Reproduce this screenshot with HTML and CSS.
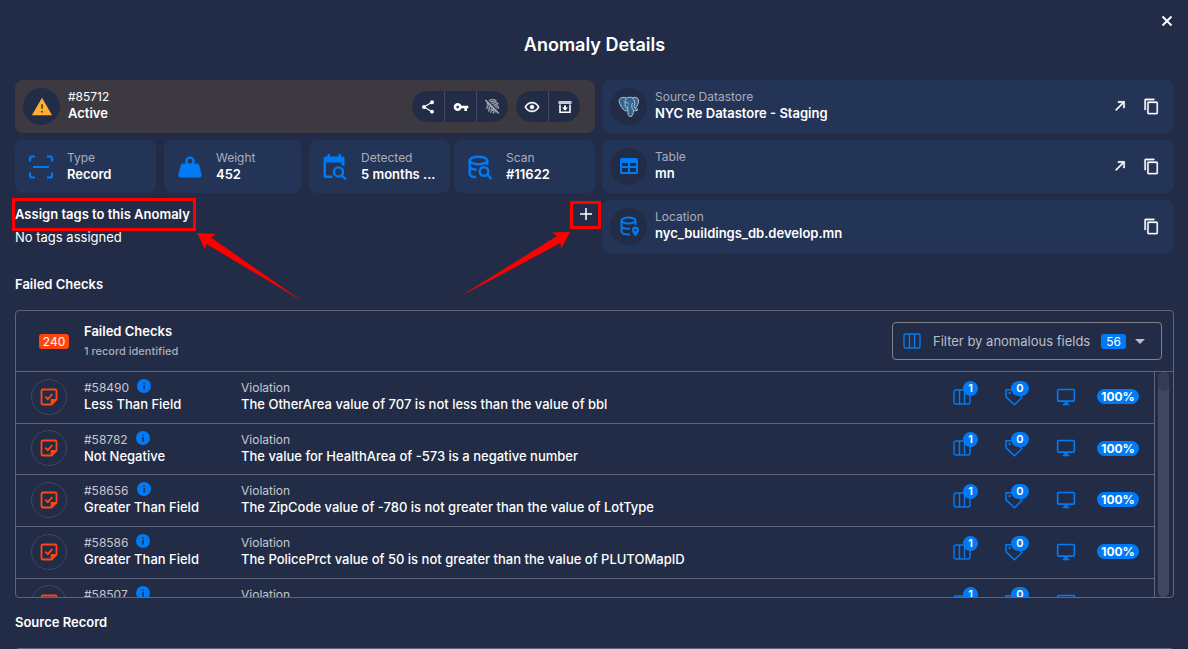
FILE: index.html
```html
<!DOCTYPE html>
<html lang="en">
<head>
<meta charset="utf-8">
<title>Anomaly Details</title>
<link rel="stylesheet" href="styles.css">
</head>
<body>
<svg class="sprite" aria-hidden="true">
  <symbol id="copy" viewBox="0 0 24 24"><path d="M19,21H8V7H19M19,5H8A2,2 0 0,0 6,7V21A2,2 0 0,0 8,23H19A2,2 0 0,0 21,21V7A2,2 0 0,0 19,5M16,1H4A2,2 0 0,0 2,3V17H4V3H16V1Z" stroke="currentColor" stroke-width=".4"/></symbol>
  <symbol id="open" viewBox="0 0 24 24"><path d="M5,17.59L15.59,7H9V5H19V15H17V8.41L6.41,19L5,17.59Z" stroke="currentColor" stroke-width=".7"/></symbol>
  <symbol id="check-note" viewBox="0 0 24 24"><path d="M5 3H19A2 2 0 0 1 21 5V15L15 21H5A2 2 0 0 1 3 19V5A2 2 0 0 1 5 3Z" fill="none" stroke="currentColor" stroke-width="2.2"/><path d="M14 22V14.5H22Z"/><path d="M7.5 11.5L10.5 14.5L16 8.5" fill="none" stroke="currentColor" stroke-width="2.2"/></symbol>
  <symbol id="columns" viewBox="0 0 18 16"><path d="M3 1H15A2 2 0 0 1 17 3V13A2 2 0 0 1 15 15H3A2 2 0 0 1 1 13V3A2 2 0 0 1 3 1ZM6.5 1V15M11.5 1V15" fill="none" stroke="currentColor" stroke-width="1.4"/></symbol>
  <symbol id="tag" viewBox="0 0 18 18"><path d="M1 1.8H9L17 9.5L9.5 16.7L1 8.8Z" fill="none" stroke="currentColor" stroke-width="1.5"/><circle cx="4.6" cy="5" r="1.2"/></symbol>
  <symbol id="monitor" viewBox="0 0 24 24"><path d="M21,16H3V4H21M21,2H3C1.89,2 1,2.89 1,4V16A2,2 0 0,0 3,18H10V20H8V22H16V20H14V18H21A2,2 0 0,0 23,16V4C23,2.89 22.1,2 21,2Z"/></symbol>
  <symbol id="info" viewBox="0 0 14 14"><circle cx="7" cy="7" r="7"/><path d="M6.3 3.4H7.8V4.9H6.3ZM6.3 6.1H7.8V10.6H6.3Z" fill="#232c46"/></symbol>
</svg>

<main class="dialog">
  <header class="dialog-head">
    <h1>Anomaly Details</h1>
    <button class="icon-btn close" aria-label="Close"><svg viewBox="0 0 12 12" width="12" height="12"><path d="M1.5 1.5L10.5 10.5M10.5 1.5L1.5 10.5" stroke="currentColor" stroke-width="1.9"/></svg></button>
  </header>

  <section class="overview">
    <div class="stack">
      <div class="card status">
        <span class="round"><svg class="warn" viewBox="0 0 24 24" width="22" height="22"><path d="M1 21H23L12 2Z"/><path d="M11 9H13V14H11ZM11 16H13V18H11Z" fill="#60482b"/></svg></span>
        <div class="pair light"><span>#85712</span><strong>Active</strong></div>
        <div class="groups">
          <div class="group">
            <button aria-label="Share"><svg viewBox="0 0 24 24" width="16" height="16"><path d="M18,16.08C17.24,16.08 16.56,16.38 16.04,16.85L8.91,12.7C8.96,12.47 9,12.24 9,12C9,11.76 8.96,11.53 8.91,11.3L15.96,7.19C16.5,7.69 17.21,8 18,8A3,3 0 0,0 21,5A3,3 0 0,0 18,2A3,3 0 0,0 15,5C15,5.24 15.04,5.47 15.09,5.7L8.04,9.81C7.5,9.31 6.79,9 6,9A3,3 0 0,0 3,12A3,3 0 0,0 6,15C6.79,15 7.5,14.69 8.04,14.19L15.16,18.34C15.11,18.55 15.08,18.77 15.08,19C15.08,20.61 16.39,21.91 18,21.91C19.61,21.91 20.92,20.61 20.92,19A2.92,2.92 0 0,0 18,16.08Z"/></svg></button>
            <button aria-label="Key"><svg viewBox="0 0 24 24" width="16" height="16"><path d="M12.65 10C11.83 7.67 9.61 6 7 6c-3.31 0-6 2.69-6 6s2.69 6 6 6c2.61 0 4.83-1.67 5.65-4H17v4h4v-4h2v-4H12.65zM7 14c-1.1 0-2-.9-2-2s.9-2 2-2 2 .9 2 2-.9 2-2 2z"/></svg></button>
            <button class="dim" aria-label="Fingerprint off"><svg viewBox="0 0 24 24" width="17" height="17" fill="none" stroke="currentColor" stroke-width="1.8"><path d="M7 4C10 2 14 2 17.500 4M4 9C6 5.800 9 5 12 5S18 5.800 20.500 9M4 15.500C4 10 8 7.800 12 7.800S20.300 10.500 20.300 15.500M6.500 19C7.500 16 6.500 13.500 8.500 11.800C11 9.800 17 9.800 17.300 15C17.400 17 17 18.500 16.500 20.500M9.500 21C10.500 18 9.800 15.500 10.600 14.300C11.500 12.800 14 13 14.300 15C14.600 17 14 19.500 13 22M12.300 15.500V18.500"/><path d="M4.500 2.500L22 20" stroke="#232c46" stroke-width="1.500"/><path d="M2 3L21 22" stroke-width="2"/></svg></button>
          </div>
          <div class="group">
            <button aria-label="Watch"><svg viewBox="0 0 24 24" width="16" height="16"><path d="M12,9A3,3 0 0,1 15,12A3,3 0 0,1 12,15A3,3 0 0,1 9,12A3,3 0 0,1 12,9M12,4.500C17,4.500 21.270,7.610 23,12C21.270,16.390 17,19.500 12,19.500C7,19.500 2.730,16.390 1,12C2.730,7.610 7,4.500 12,4.500M3.180,12C4.830,15.360 8.240,17.500 12,17.500C15.760,17.500 19.170,15.360 20.820,12C19.170,8.640 15.760,6.500 12,6.500C8.240,6.500 4.830,8.640 3.180,12Z" stroke="currentColor" stroke-width=".6"/></svg></button>
            <button aria-label="Archive"><svg viewBox="0 0 16 16" width="16" height="16"><path d="M1.500 2H14.500V5H1.500Z" opacity=".75"/><path d="M3 5.500V13.300H13V5.500" fill="none" stroke="currentColor" stroke-width="1.600"/><path d="M7 6.500H9V8.500H11L8 11.700L5 8.500H7Z"/></svg></button>
          </div>
        </div>
      </div>

      <div class="facts">
        <div class="facts-half first">
          <div class="card fact">
            <svg viewBox="0 0 28 28" width="28" height="28" fill="none" stroke="currentColor" stroke-width="2.200"><path d="M3 8.500V5.500A2 2 0 0 1 5 3.500H8M20 3.500H23A2 2 0 0 1 25 5.500V8.500M25 19.500V22.500A2 2 0 0 1 23 24.500H20M8 24.500H5A2 2 0 0 1 3 22.500V19.500M6 14H22"/></svg>
            <div class="pair"><span>Type</span><strong>Record</strong></div>
          </div>
          <div class="card fact">
            <svg viewBox="0 0 24 24" width="28" height="28"><path d="M12,3A4,4 0 0,1 16,7C16,7.730 15.810,8.410 15.460,9H18C18.950,9 19.750,9.670 19.950,10.560C21.960,18.570 22,18.780 22,19A2,2 0 0,1 20,21H4A2,2 0 0,1 2,19C2,18.780 2.040,18.570 4.050,10.560C4.250,9.670 5.050,9 6,9H8.540C8.190,8.410 8,7.730 8,7A4,4 0 0,1 12,3M12,5A2,2 0 0,0 10,7A2,2 0 0,0 12,9A2,2 0 0,0 14,7A2,2 0 0,0 12,5Z"/></svg>
            <div class="pair"><span>Weight</span><strong>452</strong></div>
          </div>
        </div>
        <div class="facts-half second">
          <div class="card fact">
            <svg viewBox="0 0 28 28" width="28" height="28"><path d="M5 3.500H6.500V1H9V3.500H17.500V1H20V3.500H21.500A2 2 0 0 1 23.500 5.500V13.500A7 7 0 0 0 20.500 12V9.500H5V22.500H11.500V25H5A2.500 2.500 0 0 1 2.500 22.500V6A2.500 2.500 0 0 1 5 3.500Z"/><g fill="none" stroke="currentColor" stroke-width="2.400"><circle cx="17.500" cy="19" r="4.600"/><path d="M20.800 22.500L25 26.500"/></g></svg>
            <div class="pair"><span>Detected</span><strong>5 months ...</strong></div>
          </div>
          <div class="card fact">
            <svg viewBox="0 0 28 28" width="28" height="28" fill="none" stroke="currentColor" stroke-width="2.400"><ellipse cx="12.500" cy="7.500" rx="8.800" ry="3.800"/><path d="M3.700 7.500V20.500C3.700 22.500 6 24 10 24.300M21.300 7.500V12M3.700 13.500C4.500 15.500 7 16.500 10.500 16.800"/><circle cx="18" cy="18.500" r="4.300"/><path d="M21 21.500L25.500 26"/></svg>
            <div class="pair"><span>Scan</span><strong>#11622</strong></div>
          </div>
        </div>
      </div>

      <div class="tags">
        <div class="tags-head">
          <h2 class="marked marked-label">Assign tags to this Anomaly
            <svg class="arrow arrow-left" viewBox="0 0 106 68" width="106" height="68" aria-hidden="true"><path d="M0 0L19 1L14 4.500L105 68L9.500 11L8 16.500Z"/></svg>
          </h2>
          <button class="icon-btn marked marked-add" aria-label="Add tag"><svg viewBox="0 0 12 12" width="12" height="12"><path d="M6 0V12M0 6H12" stroke="currentColor" stroke-width="1.500"/></svg>
            <svg class="arrow arrow-right" viewBox="0 0 110 65" width="110" height="65" aria-hidden="true"><path d="M110 0L92 .5L97 4L0 64.500L100.500 11L101 17Z"/></svg>
          </button>
        </div>
        <p>No tags assigned</p>
      </div>
    </div>

    <div class="stack">
      <div class="card source">
        <span class="round"><svg viewBox="0 0 22 22" width="22" height="22"><path d="M3 2C5 .8 7 1.500 8.500 2C11 1 13 1 14.500 1.800C17 .8 20 1.500 20.500 4C21 7 19 10 17.500 12.500C18.500 13.200 20 12.800 20 13.500C19 15 16.500 15 15.500 14.500C15.200 17 15 20 12.800 20.500C10.500 20.800 10 19 10 17L9.800 14C8.500 15.500 7 15 5.500 13.500C3 11 1 7 1.200 4.500C1.300 3 2 2.500 3 2Z" fill="#336791" stroke="#b9c5d2" stroke-width="1"/><path d="M8.500 2.300C7 4 7 6 7 8.500C7 11 8 12 9.500 12.500M14.500 2C16.500 4 17 6 16.500 8C16.200 10 16 11 17 12.300M9.800 14V10M14.500 7C13.200 9 13.500 12 15.300 14M7.500 6.500C9 6 10.500 6.500 10.300 8.500" fill="none" stroke="#b9c5d2" stroke-width=".9"/></svg></span>
        <div class="pair"><span>Source Datastore</span><strong>NYC Re Datastore - Staging</strong></div>
        <div class="actions"><button class="icon-btn" aria-label="Open datastore"><svg width="16" height="16"><use href="#open"/></svg></button><button class="icon-btn" aria-label="Copy datastore"><svg width="17" height="17"><use href="#copy"/></svg></button></div>
      </div>
      <div class="card source">
        <span class="round"><svg viewBox="0 0 22 22" width="22" height="22"><path d="M4 2H18A2 2 0 0 1 20 4V16A2 2 0 0 1 18 18H4A2 2 0 0 1 2 16V4A2 2 0 0 1 4 2ZM4 7V10H10V7ZM12 7V10H18V7ZM4 12V16H10V12ZM12 12V16H18V12Z" fill-rule="evenodd"/></svg></span>
        <div class="pair"><span>Table</span><strong>mn</strong></div>
        <div class="actions"><button class="icon-btn" aria-label="Open table"><svg width="16" height="16"><use href="#open"/></svg></button><button class="icon-btn" aria-label="Copy table"><svg width="17" height="17"><use href="#copy"/></svg></button></div>
      </div>
      <div class="card source">
        <span class="round"><svg viewBox="0 0 22 22" width="22" height="22" fill="none" stroke="currentColor" stroke-width="1.900"><ellipse cx="10.500" cy="4.500" rx="7" ry="3"/><path d="M3.500 5V15.500C3.500 17.500 7 18.500 12 18.500M17.500 5V9M3.500 10C4 12 7 13 12 12.800"/><path d="M17.500 10.500A3.500 3.500 0 0 1 21 14C21 16.500 17.500 20.500 17.500 20.500S14 16.500 14 14A3.500 3.500 0 0 1 17.500 10.500ZM17.500 12.800A1.300 1.300 0 1 0 17.500 15.400A1.300 1.300 0 1 0 17.500 12.800Z" fill="currentColor" fill-rule="evenodd" stroke="none"/></svg></span>
        <div class="pair"><span>Location</span><strong>nyc_buildings_db.develop.mn</strong></div>
        <div class="actions"><button class="icon-btn" aria-label="Copy location"><svg width="17" height="17"><use href="#copy"/></svg></button></div>
      </div>
    </div>
  </section>

  <h2 class="section-title">Failed Checks</h2>
  <section class="panel">
    <header class="panel-head">
      <span class="count">240</span>
      <div class="panel-title"><h3>Failed Checks</h3><p>1 record identified</p></div>
      <button class="filter"><svg width="18" height="16"><use href="#columns"/></svg><span class="filter-text">Filter by anomalous fields</span><span class="filter-count">56</span><svg viewBox="0 0 10 5" width="10" height="5"><path d="M0 0H10L5 5Z"/></svg></button>
    </header>
    <div class="list-wrap">
      <ul class="list">
        <li class="row">
          <span class="ring"><svg width="20" height="20"><use href="#check-note"/></svg></span>
          <div class="check"><span class="id">#58490 <svg width="14" height="14"><use href="#info"/></svg></span><strong>Less Than Field</strong></div>
          <div class="check"><span class="id">Violation</span><strong>The OtherArea value of 707 is not less than the value of bbl</strong></div>
          <div class="meta"><span class="badged"><svg width="18" height="16"><use href="#columns"/></svg><b class="dot">1</b></span><span class="badged"><svg width="18" height="18"><use href="#tag"/></svg><b class="dot wide">0</b></span><svg width="20" height="20"><use href="#monitor"/></svg><span class="pill">100%</span></div>
        </li>
        <li class="row">
          <span class="ring"><svg width="20" height="20"><use href="#check-note"/></svg></span>
          <div class="check"><span class="id">#58782 <svg width="14" height="14"><use href="#info"/></svg></span><strong>Not Negative</strong></div>
          <div class="check"><span class="id">Violation</span><strong>The value for HealthArea of -573 is a negative number</strong></div>
          <div class="meta"><span class="badged"><svg width="18" height="16"><use href="#columns"/></svg><b class="dot">1</b></span><span class="badged"><svg width="18" height="18"><use href="#tag"/></svg><b class="dot wide">0</b></span><svg width="20" height="20"><use href="#monitor"/></svg><span class="pill">100%</span></div>
        </li>
        <li class="row">
          <span class="ring"><svg width="20" height="20"><use href="#check-note"/></svg></span>
          <div class="check"><span class="id">#58656 <svg width="14" height="14"><use href="#info"/></svg></span><strong>Greater Than Field</strong></div>
          <div class="check"><span class="id">Violation</span><strong>The ZipCode value of -780 is not greater than the value of LotType</strong></div>
          <div class="meta"><span class="badged"><svg width="18" height="16"><use href="#columns"/></svg><b class="dot">1</b></span><span class="badged"><svg width="18" height="18"><use href="#tag"/></svg><b class="dot wide">0</b></span><svg width="20" height="20"><use href="#monitor"/></svg><span class="pill">100%</span></div>
        </li>
        <li class="row">
          <span class="ring"><svg width="20" height="20"><use href="#check-note"/></svg></span>
          <div class="check"><span class="id">#58586 <svg width="14" height="14"><use href="#info"/></svg></span><strong>Greater Than Field</strong></div>
          <div class="check"><span class="id">Violation</span><strong>The PolicePrct value of 50 is not greater than the value of PLUTOMapID</strong></div>
          <div class="meta"><span class="badged"><svg width="18" height="16"><use href="#columns"/></svg><b class="dot">1</b></span><span class="badged"><svg width="18" height="18"><use href="#tag"/></svg><b class="dot wide">0</b></span><svg width="20" height="20"><use href="#monitor"/></svg><span class="pill">100%</span></div>
        </li>
        <li class="row">
          <span class="ring"><svg width="20" height="20"><use href="#check-note"/></svg></span>
          <div class="check"><span class="id">#58507 <svg width="14" height="14"><use href="#info"/></svg></span></div>
          <div class="check"><span class="id">Violation</span></div>
          <div class="meta"><span class="badged"><svg width="18" height="16"><use href="#columns"/></svg><b class="dot">1</b></span><span class="badged"><svg width="18" height="18"><use href="#tag"/></svg><b class="dot wide">0</b></span><svg width="20" height="20"><use href="#monitor"/></svg></div>
        </li>
      </ul>
      <div class="track"><div class="thumb"></div></div>
    </div>
  </section>

  <h2 class="section-title">Source Record</h2>
  <section class="panel record"></section>
</main>
</body>
</html>
```
FILE: styles.css
```css
* { box-sizing: border-box; }

:root {
  --bg: #232c46;
  --card: #243456;
  --line: #5f6679;
  --blue: #007bf5;
  --muted: #a9aebb;
  --red: #fe0000;
}

html { background: var(--bg); }

body {
  margin: 0;
  height: 100vh;
  overflow: hidden;
  color: #fff;
  font: 13px/16px Inter, "Liberation Sans", sans-serif;
}

h1, h2, h3, p, ul { margin: 0; padding: 0; }
h2, h3 { font-size: 13px; font-weight: 600; }
strong { font-weight: 600; }
svg { display: block; flex: none; fill: currentColor; }
svg[fill="none"] { fill: none; }
button { padding: 0; border: 0; background: none; color: inherit; font: inherit; cursor: pointer; }

.sprite { position: absolute; width: 0; height: 0; }
.dialog { height: 100%; padding: 0 14px 0 15px; overflow: hidden; }

.dialog-head {
  display: grid;
  place-items: center;
  height: 80px;
  padding-top: 10px;
  position: relative;
}
.dialog-head h1 { font-size: 18px; line-height: 24px; font-weight: 600; }
.icon-btn { display: grid; place-items: center; }
.close { position: absolute; top: 15px; right: 1px; }

.overview { display: grid; grid-template-columns: 580fr 572fr; gap: 7px; margin-bottom: 7px; }
.stack { display: flex; flex-direction: column; gap: 7px; min-width: 0; }

.card {
  display: flex;
  align-items: center;
  min-height: 53px;
  border-radius: 8px;
  background: var(--card);
}
.status { gap: 8px; padding: 0 15px 0 8px; background: #3c3a40; }
.source { gap: 8px; padding: 0 14px 0 8px; }
.round {
  display: grid;
  place-items: center;
  flex: none;
  width: 37px;
  height: 37px;
  border-radius: 50%;
  background: var(--bg);
  color: var(--blue);
}
.warn { color: #ffb02e; }

.pair { display: flex; flex-direction: column; min-width: 0; padding-bottom: 3px; white-space: nowrap; }
.pair span { font-size: 12px; color: var(--muted); }
.pair.light span { color: #fff; }

.groups { display: flex; gap: 8px; margin-left: auto; }
.group { display: flex; height: 31px; border-radius: 16px; background: var(--bg); }
.group button { display: grid; place-items: center; width: 32px; }
.group button + button { border-left: 1px solid #414961; }
.dim { color: #a3a7b2; }

.facts { display: grid; grid-template-columns: 1fr 1fr; gap: 8px; }
.facts-half { display: grid; }
.first { grid-template-columns: 141fr 137fr; gap: 8px; }
.second { grid-template-columns: 1fr 1fr; gap: 4px; }
.fact { gap: 12px; padding-left: 12px; min-width: 0; }
.fact > svg { color: var(--blue); }
.fact .pair { padding-bottom: 1px; }

.tags-head { display: flex; justify-content: space-between; align-items: center; height: 28px; }
.tags p { line-height: 18px; }
.marked { position: relative; }
.marked::after { content: ""; position: absolute; border: 3px solid var(--red); }
.marked-label::after { inset: -8px -6px -9px -3px; }
.marked-add { margin-right: 3px; }
.marked-add::after { inset: -7px -9px -9px -10px; }
.arrow { position: absolute; color: var(--red); z-index: 1; }
.arrow-left { left: 182px; top: 27px; }
.arrow-right { right: 22px; top: 24px; }

.actions { display: flex; gap: 15px; margin-left: auto; padding-bottom: 1px; }

.section-title { padding: 16px 0 18px; line-height: 16px; }

.panel { border: 1px solid var(--line); border-radius: 4px; }
.panel-head { display: flex; align-items: center; height: 60px; padding: 0 11px 0 23px; }
.count {
  width: 30px;
  margin-right: 15px;
  border-radius: 3px;
  background: #ff4612;
  font-size: 12px;
  line-height: 15px;
  text-align: center;
}
.panel-title { display: flex; flex-direction: column; gap: 4px; }
.panel-title p { font-size: 11px; font-weight: 500; color: var(--muted); }

.filter {
  display: flex;
  align-items: center;
  width: 270px;
  height: 38px;
  margin-left: auto;
  padding: 0 16px 0 10px;
  border: 1px solid #828285;
  border-radius: 4px;
  color: #bcbfc8;
}
.filter svg:first-child { color: var(--blue); }
.filter-text { margin-left: 12px; }
.filter-count {
  width: 25px;
  margin: 0 9px 0 auto;
  border-radius: 3px;
  background: var(--blue);
  color: #fff;
  font-size: 12px;
  line-height: 15px;
}

.list-wrap { display: flex; height: 226px; border-top: 1px solid var(--line); }
.list { flex: 1; overflow: hidden; border-right: 1px solid var(--line); list-style: none; }
.row {
  display: grid;
  grid-template-columns: 53px 157px 1fr auto;
  align-items: center;
  height: 52px;
  padding: 0 15px 2px;
  border-bottom: 1px solid var(--line);
}
.row:nth-child(3n + 2) { height: 51px; }
.ring {
  display: grid;
  place-items: center;
  width: 36px;
  height: 36px;
  border: 1px solid #3f475e;
  border-radius: 50%;
  color: #ff4612;
}
.check { display: flex; flex-direction: column; height: 35px; line-height: 17px; white-space: nowrap; }
.check strong { font-weight: 500; }
.id { display: flex; gap: 8px; height: 17px; font-size: 12px; color: #c5c8d0; }
.id svg { color: var(--blue); }

.meta { display: grid; grid-template-columns: 52px 51px 41px 42px; align-items: center; color: var(--blue); }
.badged { position: relative; }
.dot {
  position: absolute;
  left: 10px;
  bottom: 9px;
  min-width: 15px;
  border-radius: 8px;
  background: var(--blue);
  color: #fff;
  font-size: 11px;
  font-weight: 600;
  line-height: 15px;
  text-align: center;
}
.dot.wide { left: 6px; bottom: 10px; min-width: 18px; }
.pill { border-radius: 8px; background: var(--blue); color: #fff; font-size: 12px; font-weight: 700; line-height: 15px; text-align: center; }

.track { width: 11px; margin: 0 4px 0 3px; border-radius: 6px; background: #40475f; }
.thumb { height: 19px; border-radius: 6px; background: #353c51; }

.record { height: 40px; }
```
